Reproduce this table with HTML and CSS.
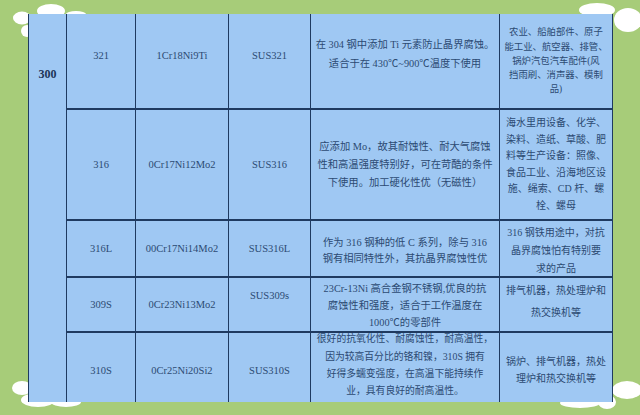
FILE: index.html
```html
<!DOCTYPE html>
<html lang="zh">
<head>
<meta charset="utf-8">
<link rel="stylesheet" href="styles.css">
</head>
<body>
<svg class="clouds" width="640" height="415" viewBox="0 0 640 415" aria-hidden="true">
  <g fill="#ffffff">
    <ellipse cx="51" cy="11" rx="14" ry="7"/>
    <ellipse cx="22" cy="18" rx="9" ry="6.5"/>
    <ellipse cx="27" cy="31" rx="6" ry="6"/>
    <ellipse cx="76" cy="14" rx="10" ry="3"/>
    <ellipse cx="597" cy="10" rx="18" ry="7"/>
    <ellipse cx="628" cy="20" rx="14" ry="12"/>
    <ellipse cx="22" cy="388" rx="10" ry="7"/>
    <ellipse cx="38" cy="400" rx="17" ry="7"/>
    <ellipse cx="66" cy="402" rx="15" ry="5"/>
    <ellipse cx="627" cy="390" rx="15" ry="9"/>
    <ellipse cx="580" cy="403" rx="20" ry="5"/>
    <ellipse cx="607" cy="402" rx="9" ry="7"/>
  </g>
</svg>
<div class="sheet">
  <div class="grid">
    <div class="cell series">300</div>

    <div class="cell num r1 up12">321</div>
    <div class="cell num r1 up12">1Cr18Ni9Ti</div>
    <div class="cell num r1 up12">SUS321</div>
    <div class="cell zh r1 lh19 up15">在 304 钢中添加 Ti 元素防止晶界腐蚀。<br>适合于在 430℃~900℃温度下使用</div>
    <div class="cell zh use tight r1 lh14 last">农业、船舶部件、原子<br>能工业、航空器、排管、<br>锅炉汽包汽车配件(风<br>挡雨刷、消声器、模制<br>品)</div>

    <div class="cell num top">316</div>
    <div class="cell num top">0Cr17Ni12Mo2</div>
    <div class="cell num top">SUS316</div>
    <div class="cell zh top lh18">应添加 Mo，故其耐蚀性、耐大气腐蚀<br>性和高温强度特别好，可在苛酷的条件<br>下使用。加工硬化性优（无磁性）</div>
    <div class="cell zh use top lh16 last">海水里用设备、化学、<br>染料、造纸、草酸、肥<br>料等生产设备：照像、<br>食品工业、沿海地区设<br>施、绳索、CD 杆、螺<br>栓、螺母</div>

    <div class="cell num top">316L</div>
    <div class="cell num top">00Cr17Ni14Mo2</div>
    <div class="cell num top">SUS316L</div>
    <div class="cell zh top lh16 down4">作为 316 钢种的低 C 系列，除与 316<br>钢有相同特性外，其抗晶界腐蚀性优</div>
    <div class="cell zh use top lh18 down4 last">316 钢铁用途中，对抗<br>晶界腐蚀怕有特别要<br>求的产品</div>

    <div class="cell num top">309S</div>
    <div class="cell num top">0Cr23Ni13Mo2</div>
    <div class="cell num top up19">SUS309s</div>
    <div class="cell zh top lh17 down2">23Cr-13Ni 高合金钢不锈钢,优良的抗<br>腐蚀性和强度，适合于工作温度在<br>1000℃的零部件</div>
    <div class="cell zh use top lh22 up4 last">排气机器，热处理炉和<br>热交换机等</div>

    <div class="cell num top down6">310S</div>
    <div class="cell num top down6">0Cr25Ni20Si2</div>
    <div class="cell num top down6">SUS310S</div>
    <div class="cell zh small top lh17 up3">很好的抗氧化性、耐腐蚀性，耐高温性，<br>因为较高百分比的铬和镍，310S 拥有<br>好得多蠕变强度，在高温下能持续作<br>业，具有良好的耐高温性。</div>
    <div class="cell zh use top lh17 down4 last">锅炉、排气机器，热处<br>理炉和热交换机等</div>
  </div>
</div>
</body>
</html>
```

FILE: styles.css
```css
html, body {
  margin: 0;
  padding: 0;
}

body {
  width: 640px;
  height: 415px;
  overflow: hidden;
  background: #a7cc79;
  position: relative;
  font-family: "Liberation Serif", "Noto Sans CJK SC", serif;
}

.clouds {
  position: absolute;
  top: 0;
  left: 0;
  z-index: 0;
}

.sheet {
  position: relative;
  z-index: 1;
  padding: 14px 0 0 28px;
}

.grid {
  display: grid;
  grid-template-columns: 38px 69px 93px 82px 189px 114px;
  grid-template-rows: 94px 111px 57px 55px 71px;
  width: 585px;
  background: #9fc8f3;
}

.cell {
  box-sizing: border-box;
  display: flex;
  align-items: center;
  justify-content: center;
  text-align: center;
  white-space: nowrap;
  border-left: 1px solid #1f3a60;
  color: #2c4a72;
}

.series {
  grid-row: 1 / span 5;
  grid-column: 1;
  align-items: flex-start;
  padding-top: 53px;
  font-weight: bold;
  font-size: 12px;
  color: #1c3558;
}

.num {
  font-size: 10.5px;
}

.zh {
  font-family: "Liberation Serif", "Noto Sans CJK SC", serif;
  font-size: 10.3px;
}

.small {
  font-size: 9.8px;
}

.use {
  font-size: 10px;
}

.tight {
  font-size: 9.4px;
}

.top {
  border-top: 2px solid #1f3a60;
}

.last {
  border-right: 1.5px solid #1f3a60;
}

.lh14 { line-height: 14.3px; }
.lh16 { line-height: 16.5px; }
.lh17 { line-height: 17.3px; }
.lh18 { line-height: 18px; }
.lh19 { line-height: 19px; }
.lh22 { line-height: 22px; }

.up3 { padding-bottom: 5px; }
.up4 { padding-bottom: 5px; }
.up12 { padding-bottom: 12px; }
.up15 { padding-bottom: 15px; }
.up19 { padding-bottom: 19px; }
.down2 { padding-top: 2px; }
.down4 { padding-top: 5px; }
.down6 { padding-top: 6px; }
```
